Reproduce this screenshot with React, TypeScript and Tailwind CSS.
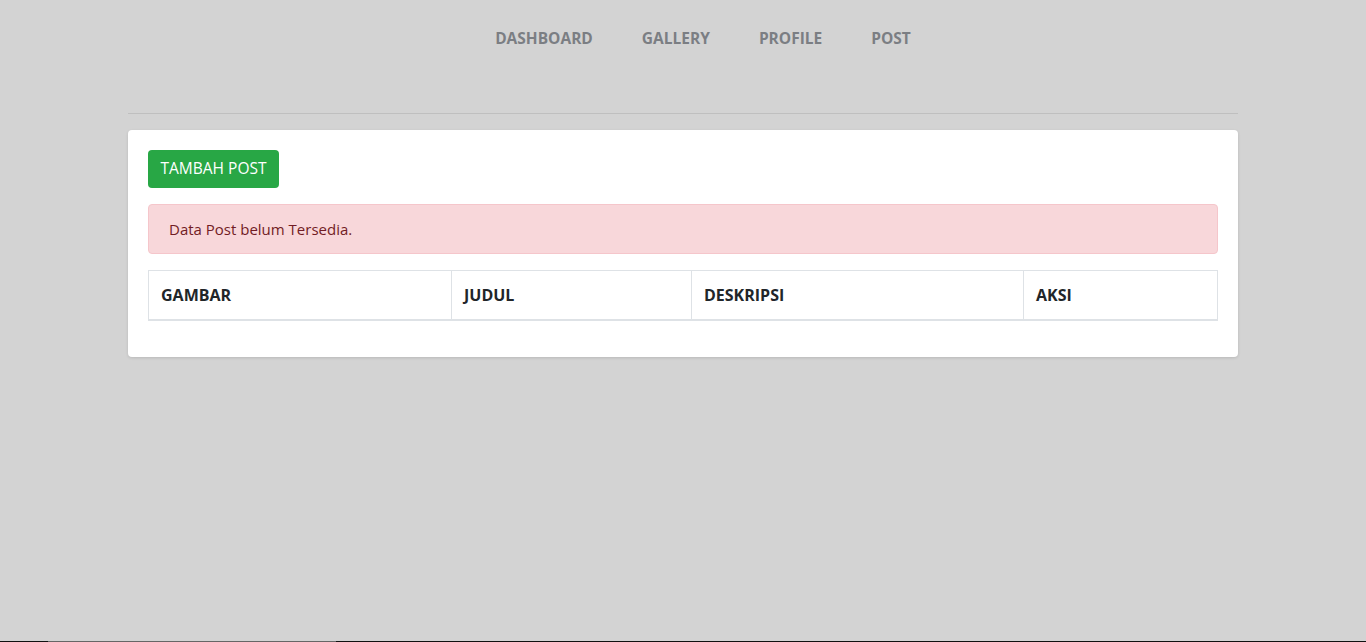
const navItems = ['DASHBOARD', 'GALLERY', 'PROFILE', 'POST']

const columns = [
  { label: 'GAMBAR', width: 'w-[303px]' },
  { label: 'JUDUL', width: 'w-[240px]' },
  { label: 'DESKRIPSI', width: 'w-[332px]' },
  { label: 'AKSI', width: '' },
]

export default function App() {
  return (
    <div className="flex min-h-[642px] flex-col bg-[#d3d3d3] font-['Open_Sans','Noto_Sans',sans-serif] text-[#212529]">
      <div className="flex-1">
        <nav className="flex justify-center gap-[49px] pt-[26px] pl-10">
          {navItems.map((item) => (
            <a key={item} href="#" className="text-[15.5px] leading-6 font-bold text-[#7b7e83]">
              {item}
            </a>
          ))}
        </nav>

        <div className="mx-auto w-[1110px]">
          <hr className="mt-[63px] border-t border-[#bfbfbf]" />

          <div className="mt-4 rounded bg-white p-5 shadow-[0_1px_3px_rgba(0,0,0,0.12)]">
            <button
              type="button"
              className="h-[38px] w-[131px] rounded bg-[#28a745] text-[15.5px] text-white"
            >
              TAMBAH POST
            </button>

            <div className="mt-4 rounded border border-[#f5c6cb] bg-[#f8d7da] px-5 py-3 text-[15px] leading-6 text-[#721c24]">
              Data Post belum Tersedia.
            </div>

            <div className="mt-4 mb-4 flex border border-[#dee2e6] border-b-2">
              {columns.map((col, i) => (
                <div
                  key={col.label}
                  className={`${col.width} ${i === columns.length - 1 ? 'flex-1' : 'border-r border-[#dee2e6]'} p-3 text-base leading-6 font-bold`}
                >
                  {col.label}
                </div>
              ))}
            </div>
          </div>
        </div>
      </div>

      <div className="flex h-px">
        <div className="w-12 bg-[#111]" />
        <div className="w-[288px] bg-[#666]" />
        <div className="flex-1 bg-[#111]" />
      </div>
    </div>
  )
}
